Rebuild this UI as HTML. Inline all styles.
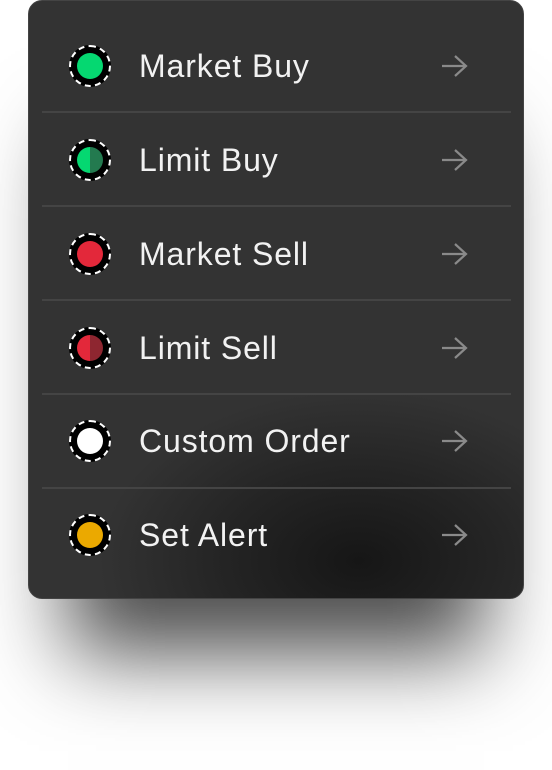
<html><head><style>
body{margin:0;width:552px;height:770px;background:#fff;font-family:"Liberation Sans",sans-serif;overflow:hidden}
.card{position:absolute;left:28px;top:0;width:494px;height:597px;border:1px solid #444;border-radius:14px;
background:radial-gradient(ellipse 260px 170px at 330px 560px,#161616 0%,#252525 55%,#333 100%),#333;
box-shadow:0 95px 80px -40px rgba(0,0,0,.7)}
.row{position:absolute;left:0;width:494px;height:94px}
.sep{position:absolute;left:13px;width:469px;height:2px;background:#444}
.ic{position:absolute;left:40px;top:25px;width:42px;height:42px;box-sizing:border-box;border:2px dashed #fff;border-radius:50%;background:#000}
.ic i{position:absolute;left:6px;top:6px;width:26px;height:26px;border-radius:50%}
.t{position:absolute;left:110px;top:28px;font-size:32px;color:#f2f2f2;letter-spacing:0.9px;line-height:36px}
svg{position:absolute;left:411px;top:33px}
</style></head><body><div class="card">
<div class="row" style="top:19px"><div class="ic"><i style="background:#05d871"></i></div><div class="t">Market Buy</div><svg width="28" height="26"><path d="M2 13H26M15 3L26 13L15 23" stroke="#8a8a8a" stroke-width="2.2" fill="none"/></svg></div>
<div class="sep" style="top:110px"></div>
<div class="row" style="top:113px"><div class="ic"><i style="background:linear-gradient(90deg,#05d871 50%,#237a4f 50%)"></i></div><div class="t">Limit Buy</div><svg width="28" height="26"><path d="M2 13H26M15 3L26 13L15 23" stroke="#8a8a8a" stroke-width="2.2" fill="none"/></svg></div>
<div class="sep" style="top:204px"></div>
<div class="row" style="top:207px"><div class="ic"><i style="background:#e3283a"></i></div><div class="t">Market Sell</div><svg width="28" height="26"><path d="M2 13H26M15 3L26 13L15 23" stroke="#8a8a8a" stroke-width="2.2" fill="none"/></svg></div>
<div class="sep" style="top:298px"></div>
<div class="row" style="top:301px"><div class="ic"><i style="background:linear-gradient(90deg,#e3283a 50%,#8e2630 50%)"></i></div><div class="t">Limit Sell</div><svg width="28" height="26"><path d="M2 13H26M15 3L26 13L15 23" stroke="#8a8a8a" stroke-width="2.2" fill="none"/></svg></div>
<div class="sep" style="top:392px"></div>
<div class="row" style="top:394px"><div class="ic"><i style="background:#fff"></i></div><div class="t">Custom Order</div><svg width="28" height="26"><path d="M2 13H26M15 3L26 13L15 23" stroke="#8a8a8a" stroke-width="2.2" fill="none"/></svg></div>
<div class="sep" style="top:486px"></div>
<div class="row" style="top:488px"><div class="ic"><i style="background:#eba900"></i></div><div class="t">Set Alert</div><svg width="28" height="26"><path d="M2 13H26M15 3L26 13L15 23" stroke="#8a8a8a" stroke-width="2.2" fill="none"/></svg></div>
</div></body></html>
